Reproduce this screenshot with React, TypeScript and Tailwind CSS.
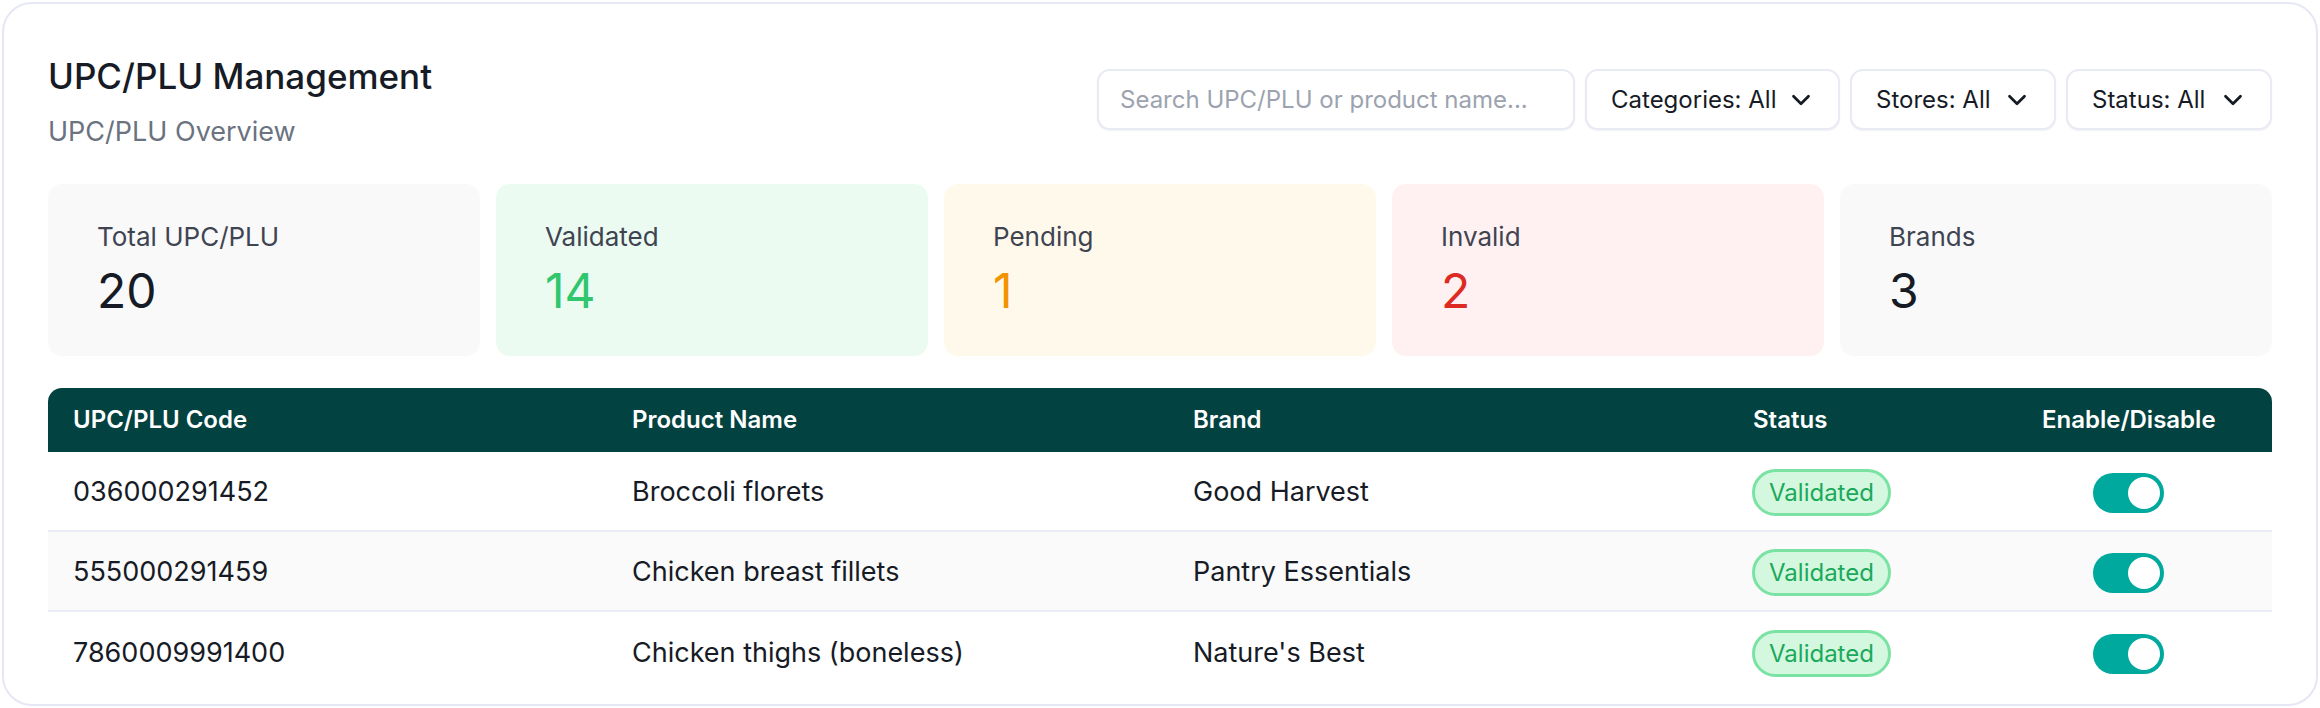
import { ChevronDown } from 'lucide-react';

const stats = [
  { label: 'Total UPC/PLU', value: '20', bg: 'bg-[#f9f9fa]', color: 'text-[#161b26]' },
  { label: 'Validated', value: '14', bg: 'bg-[#ebfbf1]', color: 'text-[#2fc66e]' },
  { label: 'Pending', value: '1', bg: 'bg-[#fff9ec]', color: 'text-[#f39300]' },
  { label: 'Invalid', value: '2', bg: 'bg-[#fff1f1]', color: 'text-[#dd2a22]' },
  { label: 'Brands', value: '3', bg: 'bg-[#f9f9fa]', color: 'text-[#161b26]' },
];

const rows = [
  { code: '036000291452', name: 'Broccoli florets', brand: 'Good Harvest', bg: 'bg-white', border: 'border-b-2 border-[#e9ebf5]' },
  { code: '555000291459', name: 'Chicken breast fillets', brand: 'Pantry Essentials', bg: 'bg-[#fafafa]', border: 'border-b-2 border-[#e9ebf5]' },
  { code: '7860009991400', name: 'Chicken thighs (boneless)', brand: "Nature's Best", bg: 'bg-white', border: '' },
];

function Filter({ label, width }: { label: string; width: string }) {
  return (
    <div
      className={`${width} h-[61px] flex items-center justify-between pl-[24px] pr-[22px] rounded-[13px] border-2 border-[#e8eaf4] bg-white shadow-[0_1px_2px_rgba(16,24,40,0.06)] text-[24px] text-[#161b26]`}
    >
      <span>{label}</span>
      <ChevronDown size={30} strokeWidth={2.2} className="text-[#161b26]" />
    </div>
  );
}

function Toggle() {
  return (
    <div className="relative inline-block w-[71px] h-[40px] rounded-full bg-[#00a99d] align-middle">
      <div className="absolute right-[4px] top-[4px] w-[32px] h-[32px] rounded-full bg-white" />
    </div>
  );
}

export default function App() {
  return (
    <div className="w-[2320px] h-[708px] p-[2px] bg-white font-['Inter',sans-serif]">
      <div className="h-[704px] overflow-hidden rounded-[30px] border-2 border-[#e5e7f4] bg-white px-[44px] pt-[51px]">
        <div className="flex items-start justify-between">
          <div className="flex flex-col">
            <div className="text-[35px] leading-[42px] font-medium text-[#161b26]">UPC/PLU Management</div>
            <div className="mt-[17px] text-[27px] leading-[36px] text-[#6b7280]">UPC/PLU Overview</div>
          </div>
          <div className="mt-[14px] flex items-center gap-[10px]">
            <div className="w-[478px] h-[61px] flex items-center px-[21px] rounded-[13px] border-2 border-[#e8eaf4] bg-white shadow-[0_1px_2px_rgba(16,24,40,0.06)] text-[24px] text-[#9ca3af]">
              Search UPC/PLU or product name...
            </div>
            <Filter label="Categories: All" width="w-[255px]" />
            <Filter label="Stores: All" width="w-[206px]" />
            <Filter label="Status: All" width="w-[206px]" />
          </div>
        </div>

        <div className="mt-[34px] grid grid-cols-5 gap-[16px]">
          {stats.map((s) => (
            <div key={s.label} className={`${s.bg} h-[172px] rounded-[14px] px-[49px] pt-[37px] flex flex-col`}>
              <div className="text-[26px] leading-[32px] text-[#3f4451]">{s.label}</div>
              <div className={`mt-[14px] text-[48px] leading-[48px] ${s.color}`}>{s.value}</div>
            </div>
          ))}
        </div>

        <table className="mt-[32px] w-full table-fixed border-separate border-spacing-0">
          <colgroup>
            <col className="w-[559px]" />
            <col className="w-[561px]" />
            <col className="w-[560px]" />
            <col className="w-[289px]" />
            <col className="w-[255px]" />
          </colgroup>
          <thead>
            <tr>
              <th className="h-[64px] bg-[#024240] rounded-tl-[14px] pl-[25px] text-left text-[24px] font-semibold text-white">UPC/PLU Code</th>
              <th className="h-[64px] bg-[#024240] pl-[25px] text-left text-[24px] font-semibold text-white">Product Name</th>
              <th className="h-[64px] bg-[#024240] pl-[25px] text-left text-[24px] font-semibold text-white">Brand</th>
              <th className="h-[64px] bg-[#024240] pl-[25px] text-left text-[24px] font-semibold text-white">Status</th>
              <th className="h-[64px] bg-[#024240] rounded-tr-[14px] pl-[25px] pr-[57px] text-center text-[24px] font-semibold text-white">Enable/Disable</th>
            </tr>
          </thead>
          <tbody>
            {rows.map((r) => (
              <tr key={r.code} className={r.bg}>
                <td className={`h-[80px] pl-[25px] pt-[3px] align-middle text-[27px] text-[#161b26] ${r.border}`}>{r.code}</td>
                <td className={`h-[80px] pl-[25px] pt-[3px] align-middle text-[27px] text-[#161b26] ${r.border}`}>{r.name}</td>
                <td className={`h-[80px] pl-[25px] pt-[3px] align-middle text-[27px] text-[#161b26] ${r.border}`}>{r.brand}</td>
                <td className={`h-[80px] pl-[24px] pt-[3px] align-middle ${r.border}`}>
                  <span className="inline-flex h-[47px] items-center rounded-full border-[3px] border-[#7ae3a3] bg-[#d4f7df] px-[14px] text-[24px] text-[#1ba95b]">
                    Validated
                  </span>
                </td>
                <td className={`h-[80px] pl-[25px] pr-[57px] pt-[3px] text-center align-middle ${r.border}`}>
                  <Toggle />
                </td>
              </tr>
            ))}
          </tbody>
        </table>
      </div>
    </div>
  );
}
